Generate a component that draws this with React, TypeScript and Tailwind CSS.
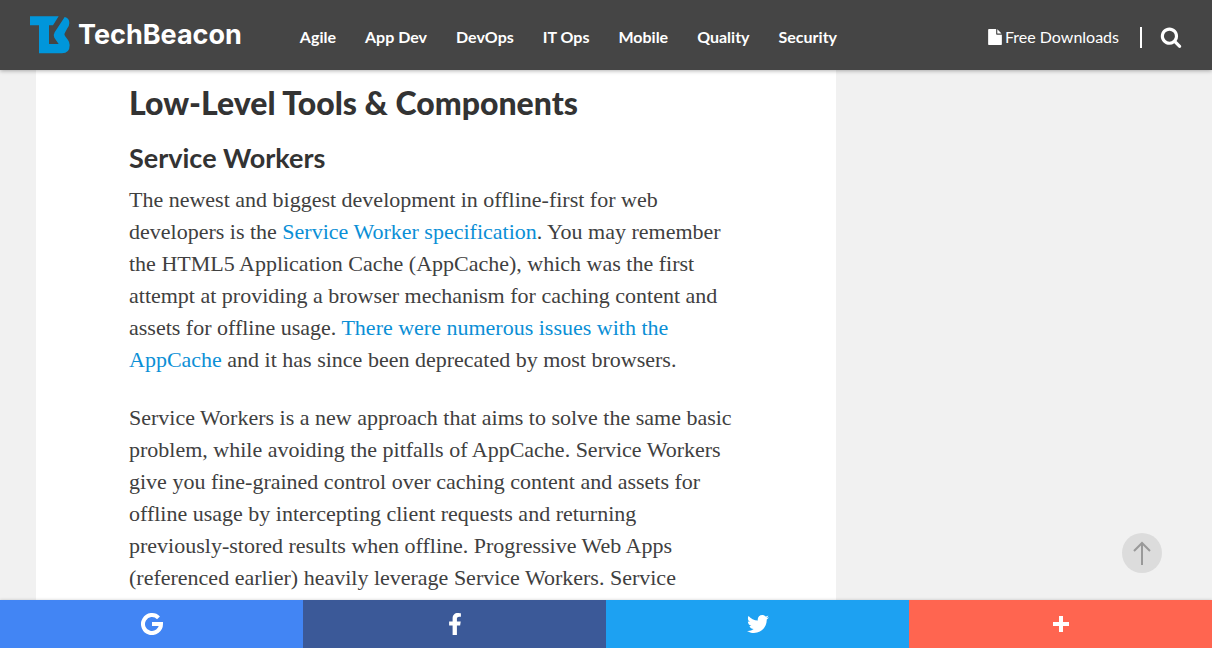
import React from "react";
import { FaFacebookF, FaTwitter } from "react-icons/fa";

const topics = ["Agile", "App Dev", "DevOps", "IT Ops", "Mobile", "Quality", "Security"];

function Logo() {
  return (
    <a href="#" className="flex items-center gap-2" aria-label="TechBeacon home">
      <svg className="h-[38px] w-10" viewBox="30 47 120 114" fill="#0096db" aria-hidden="true">
        <path d="M30 48H116L99 75H87V131H116L103 112Q99 104 104 96L134 50Q148 53 148 68Q148 76 142 84L134 99Q132 103 135 107L144 119Q149 126 149 134Q149 159 126 159H57V75H30Z" />
      </svg>
      <span className="font-['Inter'] text-[27px] leading-8 font-bold">TechBeacon</span>
    </a>
  );
}

function FileIcon() {
  return (
    <svg className="size-4" viewBox="0 0 1792 1792" fill="currentColor" aria-hidden="true">
      <path d="M1152 512v-472q22 14 36 28l408 408q14 14 28 36h-472zm-128 32q0 40 28 68t68 28h544v1056q0 40-28 68t-68 28h-1344q-40 0-68-28t-28-68v-1600q0-40 28-68t68-28h800v544z" />
    </svg>
  );
}

function SearchIcon() {
  return (
    <svg className="size-[22px]" viewBox="0 0 1792 1792" fill="currentColor" aria-hidden="true">
      <path d="M1216 832q0-185-131.5-316.5t-316.5-131.5-316.5 131.5-131.5 316.5 131.5 316.5 316.5 131.5 316.5-131.5 131.5-316.5zm512 832q0 52-38 90t-90 38q-54 0-90-38l-343-342q-179 124-399 124-143 0-273.5-55.5t-225-150-150-225-55.5-273.5 55.5-273.5 150-225 225-150 273.5-55.5 273.5 55.5 225 150 150 225 55.5 273.5q0 220-124 399l343 343q37 37 37 90z" />
    </svg>
  );
}

function Header() {
  return (
    <header className="relative z-10 flex h-[70px] shrink-0 items-center bg-[#454545] px-[30px] text-white shadow-[0_1px_4px_rgba(0,0,0,0.3)]">
      <Logo />
      <nav className="ml-[58px] flex gap-[29px] pt-1 text-base font-bold">
        {topics.map((topic) => (
          <a key={topic} href="#">{topic}</a>
        ))}
      </nav>
      <div className="ml-auto flex items-center pt-1">
        <a href="#" className="flex items-center gap-0.5 text-base">
          <FileIcon />
          Free Downloads
        </a>
        <span className="mr-[18px] ml-[21px] h-[21px] w-0.5 bg-white" />
        <button type="button" aria-label="Search"><SearchIcon /></button>
      </div>
    </header>
  );
}

function Article() {
  return (
    <article className="w-[800px] max-w-full bg-white px-[93px] pt-3 pb-8 text-[#333]">
      <h1 className="text-[32px] leading-[42px] font-black">Low-Level Tools &amp; Components</h1>
      <h2 className="mt-[18px] text-[27px] leading-8 font-bold">Service Workers</h2>
      <div className="mt-[10px] space-y-[26px] font-['Liberation_Serif',serif] text-[22px] leading-8 whitespace-nowrap text-[#404040]">
        <p>
          The newest and biggest development in offline-first for web<br />
          developers is the <a href="#" className="text-[#0b8fd6]">Service Worker specification</a>. You may remember<br />
          the HTML5 Application Cache (AppCache), which was the first<br />
          attempt at providing a browser mechanism for caching content and<br />
          assets for offline usage. <a href="#" className="text-[#0b8fd6]">There were numerous issues with the<br />
          AppCache</a> and it has since been deprecated by most browsers.
        </p>
        <p>
          Service Workers is a new approach that aims to solve the same basic<br />
          problem, while avoiding the pitfalls of AppCache. Service Workers<br />
          give you fine-grained control over caching content and assets for<br />
          offline usage by intercepting client requests and returning<br />
          previously-stored results when offline. Progressive Web Apps<br />
          (referenced earlier) heavily leverage Service Workers. Service
        </p>
      </div>
    </article>
  );
}

function ShareBar() {
  const item = "flex items-center justify-center";
  return (
    <footer className="relative z-10 grid h-12 shrink-0 grid-cols-4 text-white shadow-[0_0_3px_rgba(0,0,0,0.2)]">
      <button type="button" aria-label="Share on Google" className={`${item} bg-[#4285f4]`}>
        <svg className="size-[22px]" viewBox="0 0 22 22" fill="none" stroke="currentColor" strokeWidth="4" aria-hidden="true">
          <path d="M17.5 4.8A9 9 0 1 0 20 11H11" />
        </svg>
      </button>
      <button type="button" aria-label="Share on Facebook" className={`${item} bg-[#3b5998]`}>
        <FaFacebookF className="size-[22px]" />
      </button>
      <button type="button" aria-label="Share on Twitter" className={`${item} bg-[#1da1f2]`}>
        <FaTwitter className="size-[22px]" />
      </button>
      <button type="button" aria-label="More sharing options" className={`${item} bg-[#ff6550]`}>
        <svg className="size-4" viewBox="0 0 16 16" fill="currentColor" aria-hidden="true">
          <path d="M6 0h4v6h6v4h-6v6H6v-6H0V6h6z" />
        </svg>
      </button>
    </footer>
  );
}

export default function App() {
  return (
    <div className="flex h-screen flex-col bg-[#f1f1f1] font-['Lato',sans-serif]">
      <Header />
      <main className="relative min-h-0 flex-1 overflow-hidden px-9">
        <Article />
        <button type="button" aria-label="Back to top" className="absolute right-[50px] bottom-[27px] flex size-10 items-center justify-center rounded-full bg-[#dcdcdc] text-[#999]">
          <svg className="h-6 w-[18px]" viewBox="0 0 18 24" fill="none" stroke="currentColor" strokeWidth="2" aria-hidden="true">
            <path d="M9 24V2M1 10L9 2L17 10" />
          </svg>
        </button>
      </main>
      <ShareBar />
    </div>
  );
}
